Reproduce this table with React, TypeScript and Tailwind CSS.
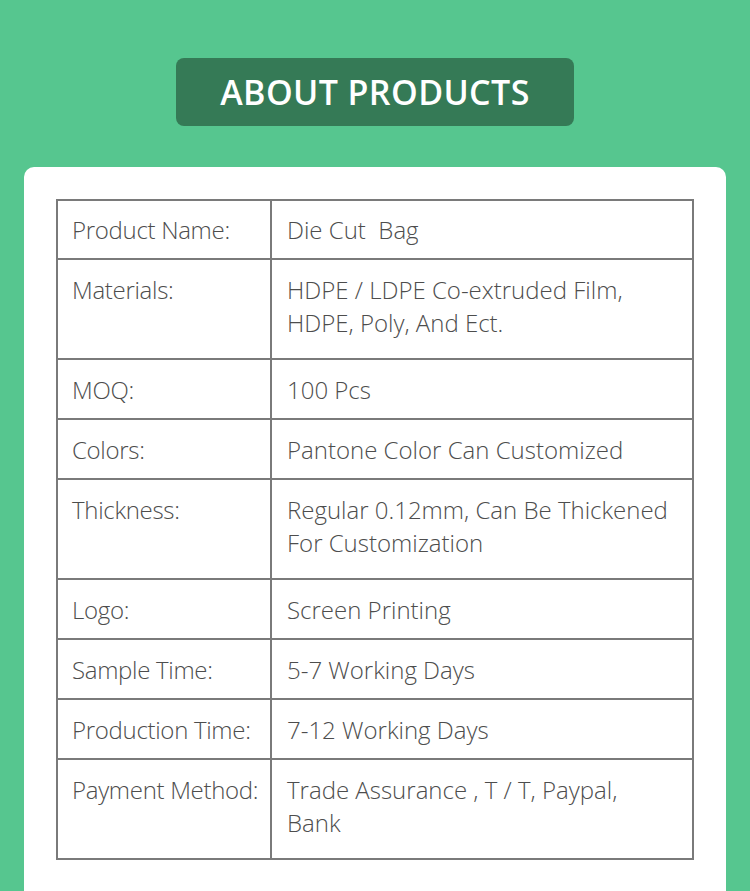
import React from 'react';

interface Row {
  label: string;
  value: string[];
  tall?: boolean;
}

const rows: Row[] = [
  { label: 'Product Name:', value: ['Die Cut\u00a0 Bag'] },
  { label: 'Materials:', value: ['HDPE / LDPE Co-extruded Film,', 'HDPE, Poly, And Ect.'], tall: true },
  { label: 'MOQ:', value: ['100 Pcs'] },
  { label: 'Colors:', value: ['Pantone Color Can Customized'] },
  { label: 'Thickness:', value: ['Regular 0.12mm, Can Be Thickened', 'For Customization'], tall: true },
  { label: 'Logo:', value: ['Screen Printing'] },
  { label: 'Sample Time:', value: ['5-7 Working Days'] },
  { label: 'Production Time:', value: ['7-12 Working Days'] },
  { label: 'Payment Method:', value: ['Trade Assurance , T / T, Paypal,', 'Bank'], tall: true },
];

export default function App() {
  return (
    <div className="w-[750px] h-[891px] overflow-hidden bg-[#56c68f] flex flex-col items-center pt-[58px] font-['Open_Sans',sans-serif]">
      <div className="w-[398px] h-[68px] rounded-[8px] bg-[#357a56] flex items-center justify-center">
        <span className="text-white text-[34px] font-semibold tracking-[0.4px]">ABOUT PRODUCTS</span>
      </div>

      <div className="mt-[41px] w-[702px] flex-1 bg-white rounded-t-[10px] px-[32px] pt-[32px]">
        <div className="border-2 border-[#7a7a7a] text-[#4d4d4d] text-[24px] font-light">
          {rows.map((r, i) => (
            <div
              key={r.label}
              className={`flex ${i > 0 ? 'border-t-2 border-[#7a7a7a]' : ''} ${i === 0 ? 'h-[57px]' : r.tall ? 'h-[100px]' : 'h-[60px]'}`}
            >
              <div className={`w-[214px] shrink-0 border-r-2 border-[#7a7a7a] pl-[14px] leading-[33px] whitespace-nowrap tracking-[-0.3px] ${i === 0 ? 'pt-[12px]' : 'pt-[13px]'}`}>
                {r.label}
              </div>
              <div className={`flex-1 pl-[15px] leading-[33px] ${i === 0 ? 'pt-[12px]' : 'pt-[13px]'}`}>
                {r.value.map((v) => (
                  <div key={v}>{v}</div>
                ))}
              </div>
            </div>
          ))}
        </div>
      </div>
    </div>
  );
}
